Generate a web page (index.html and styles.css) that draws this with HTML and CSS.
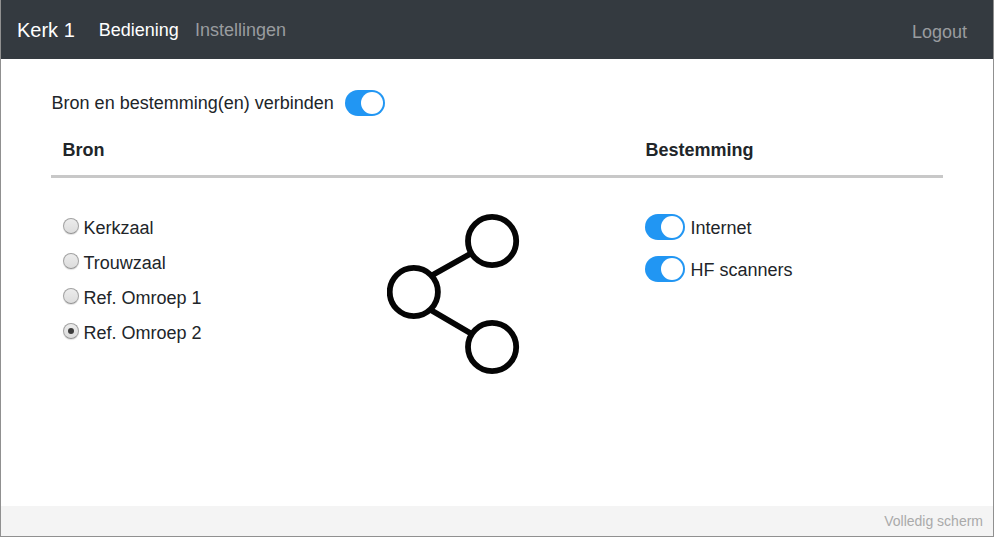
FILE: index.html
```
<!DOCTYPE html>
<html lang="nl">
<head>
<meta charset="utf-8">
<title>Kerk 1</title>
<link rel="stylesheet" href="styles.css">
</head>
<body>
<nav class="navbar">
  <a class="brand">Kerk 1</a>
  <a class="nav-link active">Bediening</a>
  <a class="nav-link">Instellingen</a>
  <a class="nav-link logout">Logout</a>
</nav>
<main class="content">
  <div class="connect"><span>Bron en bestemming(en) verbinden</span><span class="switch"></span></div>
  <div class="row head">
    <div class="col-source">Bron</div>
    <div class="col-icon"></div>
    <div class="col-target">Bestemming</div>
  </div>
  <div class="row body">
    <div class="col-source">
      <label class="option"><span class="radio"></span>Kerkzaal</label>
      <label class="option"><span class="radio"></span>Trouwzaal</label>
      <label class="option"><span class="radio"></span>Ref. Omroep 1</label>
      <label class="option"><span class="radio checked"></span>Ref. Omroep 2</label>
    </div>
    <div class="col-icon">
      <svg class="share" width="134" height="162" viewBox="0 0 134 162" fill="none" stroke="#050505" stroke-width="5.8">
        <path d="M43.8 63 L84.8 40 M43.8 97 L84.8 121"/>
        <circle cx="26.8" cy="79" r="24.1"/>
        <circle cx="105.1" cy="28" r="24.1"/>
        <circle cx="105.1" cy="134" r="24.1"/>
      </svg>
    </div>
    <div class="col-target">
      <label class="target"><span class="switch"></span><span>Internet</span></label>
      <label class="target"><span class="switch"></span><span>HF scanners</span></label>
    </div>
  </div>
</main>
<footer class="footer">Volledig scherm</footer>
</body>
</html>
```
FILE: styles.css
```
* { box-sizing: border-box; }
body {
  margin: 0;
  height: 537px;
  display: flex;
  flex-direction: column;
  border: 1px solid #909090;
  border-top: 0;
  background: #fff;
  color: #212529;
  font: 18px/27px "Liberation Sans", Arial, sans-serif;
}
.navbar {
  height: 59px;
  flex: none;
  display: flex;
  align-items: center;
  padding: 2px 26px 0 16px;
  background: #343a40;
}
.brand { font-size: 20px; color: #fff; margin-right: 24px; }
.nav-link { color: #999c9f; margin-right: 16px; }
.nav-link.active { color: #fff; }
.nav-link.logout { margin: 4px 0 0 auto; }
.nav-link.logout { margin-right: 0; }
.content { flex: 1; padding: 31px 50px 0; }
.connect { display: flex; align-items: center; height: 26px; gap: 11px; padding-left: 0.6px; }
.switch {
  width: 40px;
  height: 26px;
  flex: none;
  display: flex;
  justify-content: flex-end;
  padding: 2px;
  border-radius: 13px;
  background: #2196f3;
}
.connect .switch { margin-left: 0.4px; }
.switch::after {
  content: "";
  width: 22px;
  height: 22px;
  border-radius: 50%;
  background: #fff;
}
.row { display: grid; grid-template-columns: 324px 258px 1fr; }
.row.head {
  height: 62px;
  padding-top: 21px;
  font-weight: bold;
  border-bottom: 3px solid #c8c8c8;
}
.row.body { padding-top: 35px; }
.col-source, .col-icon, .col-target { padding-left: 12px; }
.head .col-source { padding-left: 11.5px; }
.head .col-target { padding-left: 12.4px; }
.option { display: flex; align-items: center; height: 35px; padding-top: 2px; }
.body .col-source { margin-top: -3px; }
.radio {
  width: 16px;
  height: 16px;
  flex: none;
  margin: -6px 4.5px 0 0;
  display: grid;
  place-items: center;
  border: 1px solid #a2a2a2;
  border-bottom-color: #929292;
  border-radius: 50%;
  background: linear-gradient(#ececec, #dcdcdc);
  box-shadow: 0 1px 1px rgba(0, 0, 0, .12);
}
.radio.checked::after {
  content: "";
  width: 6px;
  height: 6px;
  border-radius: 50%;
  background: #3c3c3c;
}
.share { display: block; }
.target { display: flex; align-items: center; gap: 5.5px; height: 26px; margin: 1px 0 16px; }
.target span:last-child { padding-top: 2px; }
.footer {
  height: 30px;
  flex: none;
  padding-right: 10px;
  background: #f4f4f4;
  color: #aaa;
  font-size: 14px;
  line-height: 30px;
  text-align: right;
}
```
